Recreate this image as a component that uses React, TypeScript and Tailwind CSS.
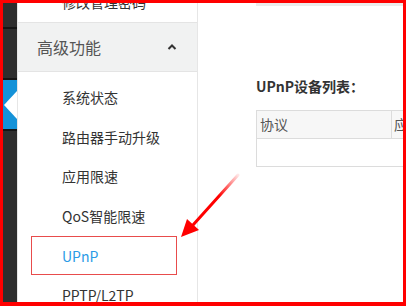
const font = { fontFamily: '"Noto Sans CJK SC", "Noto Sans", sans-serif' }

const items = ["系统状态", "路由器手动升级", "应用限速", "QoS智能限速", "UPnP", "PPTP/L2TP"]

function Rail() {
  return (
    <div className="w-[14px] h-full bg-[#2e2e2e] flex flex-col shrink-0">
      <div className="h-[24px]" />
      <div className="h-[2px] bg-[#151515]" />
      <div className="h-[49px]" />
      <div className="h-[2px] bg-[#151515]" />
      <div className="h-[49px] bg-[#1492d8] relative">
        <svg className="absolute left-0 top-[11px]" width="14" height="28" viewBox="0 0 14 28">
          <polygon points="14,0 1,14 14,28" fill="#fff" />
        </svg>
      </div>
      <div className="h-[2px] bg-[#151515]" />
    </div>
  )
}

function Sidebar() {
  return (
    <div className="w-[181px] h-full bg-white border-l border-r border-[#e6e6e6] shrink-0 overflow-hidden relative text-[14px] text-[#333]">
      <div className="h-[40px] -mt-[21px] flex items-center pl-[44px]">修改管理密码</div>
      <div className="h-[50px] bg-[#f1f2f2] border-t border-b border-[#e4e4e4] flex items-center justify-between pl-[19px] pr-[20px]">
        <span className="text-[16px] text-[#555]">高级功能</span>
        <svg width="10" height="8" viewBox="0 0 10 8">
          <path d="M1.5 6 L5 2.5 L8.5 6" stroke="#333" strokeWidth="2" fill="none" />
        </svg>
      </div>
      <div className="pt-[6px]">
        {items.map((t) => (
          <div key={t} className={`h-[39.6px] flex items-center pl-[44px] ${t === "UPnP" ? "text-[#2b9be6]" : ""}`}>
            {t}
          </div>
        ))}
      </div>
      <div className="absolute left-[13px] top-[233px] w-[146px] h-[39px] border border-[#e84c4c]" />
    </div>
  )
}

function Content() {
  return (
    <div className="flex-1 h-full overflow-hidden bg-white pl-[58px]">
      <div className="h-[3px] bg-[#ebebeb] -mr-2" />
      <div className="mt-[70px] font-bold text-[14px] text-[#333] whitespace-nowrap">UPnP设备列表：</div>
      <div className="mt-[13px] w-[300px] border border-[#dcdcdc] text-[14px] text-[#555]">
        <div className="flex h-[28px] bg-[#f7f7f7] border-b border-[#dcdcdc]">
          <div className="w-[135px] border-r border-[#dcdcdc] flex items-center pl-[3px]">协议</div>
          <div className="flex-1 flex items-center pl-[2px]">应用</div>
        </div>
        <div className="h-[27px]" />
      </div>
    </div>
  )
}

export default function App() {
  return (
    <div style={font} className="w-[406px] h-[306px] border-t-[3px] border-l-[3px] border-r-[3px] border-b-[4px] border-[#ff0000] flex relative overflow-hidden">
      <Rail />
      <Sidebar />
      <Content />
      <svg className="absolute left-0 top-0 pointer-events-none" width="406" height="306" viewBox="0 0 406 306">
        <defs>
          <linearGradient id="g" x1="235" y1="172" x2="180" y2="232" gradientUnits="userSpaceOnUse">
            <stop offset="0" stopColor="#ff0000" stopOpacity="0.1" />
            <stop offset="0.35" stopColor="#ff0000" stopOpacity="1" />
          </linearGradient>
        </defs>
        <path d="M235 172 L190 222" stroke="url(#g)" strokeWidth="3" strokeLinecap="round" />
        <polygon points="178,234 184,216 196,227" fill="#ff0000" />
      </svg>
    </div>
  )
}
